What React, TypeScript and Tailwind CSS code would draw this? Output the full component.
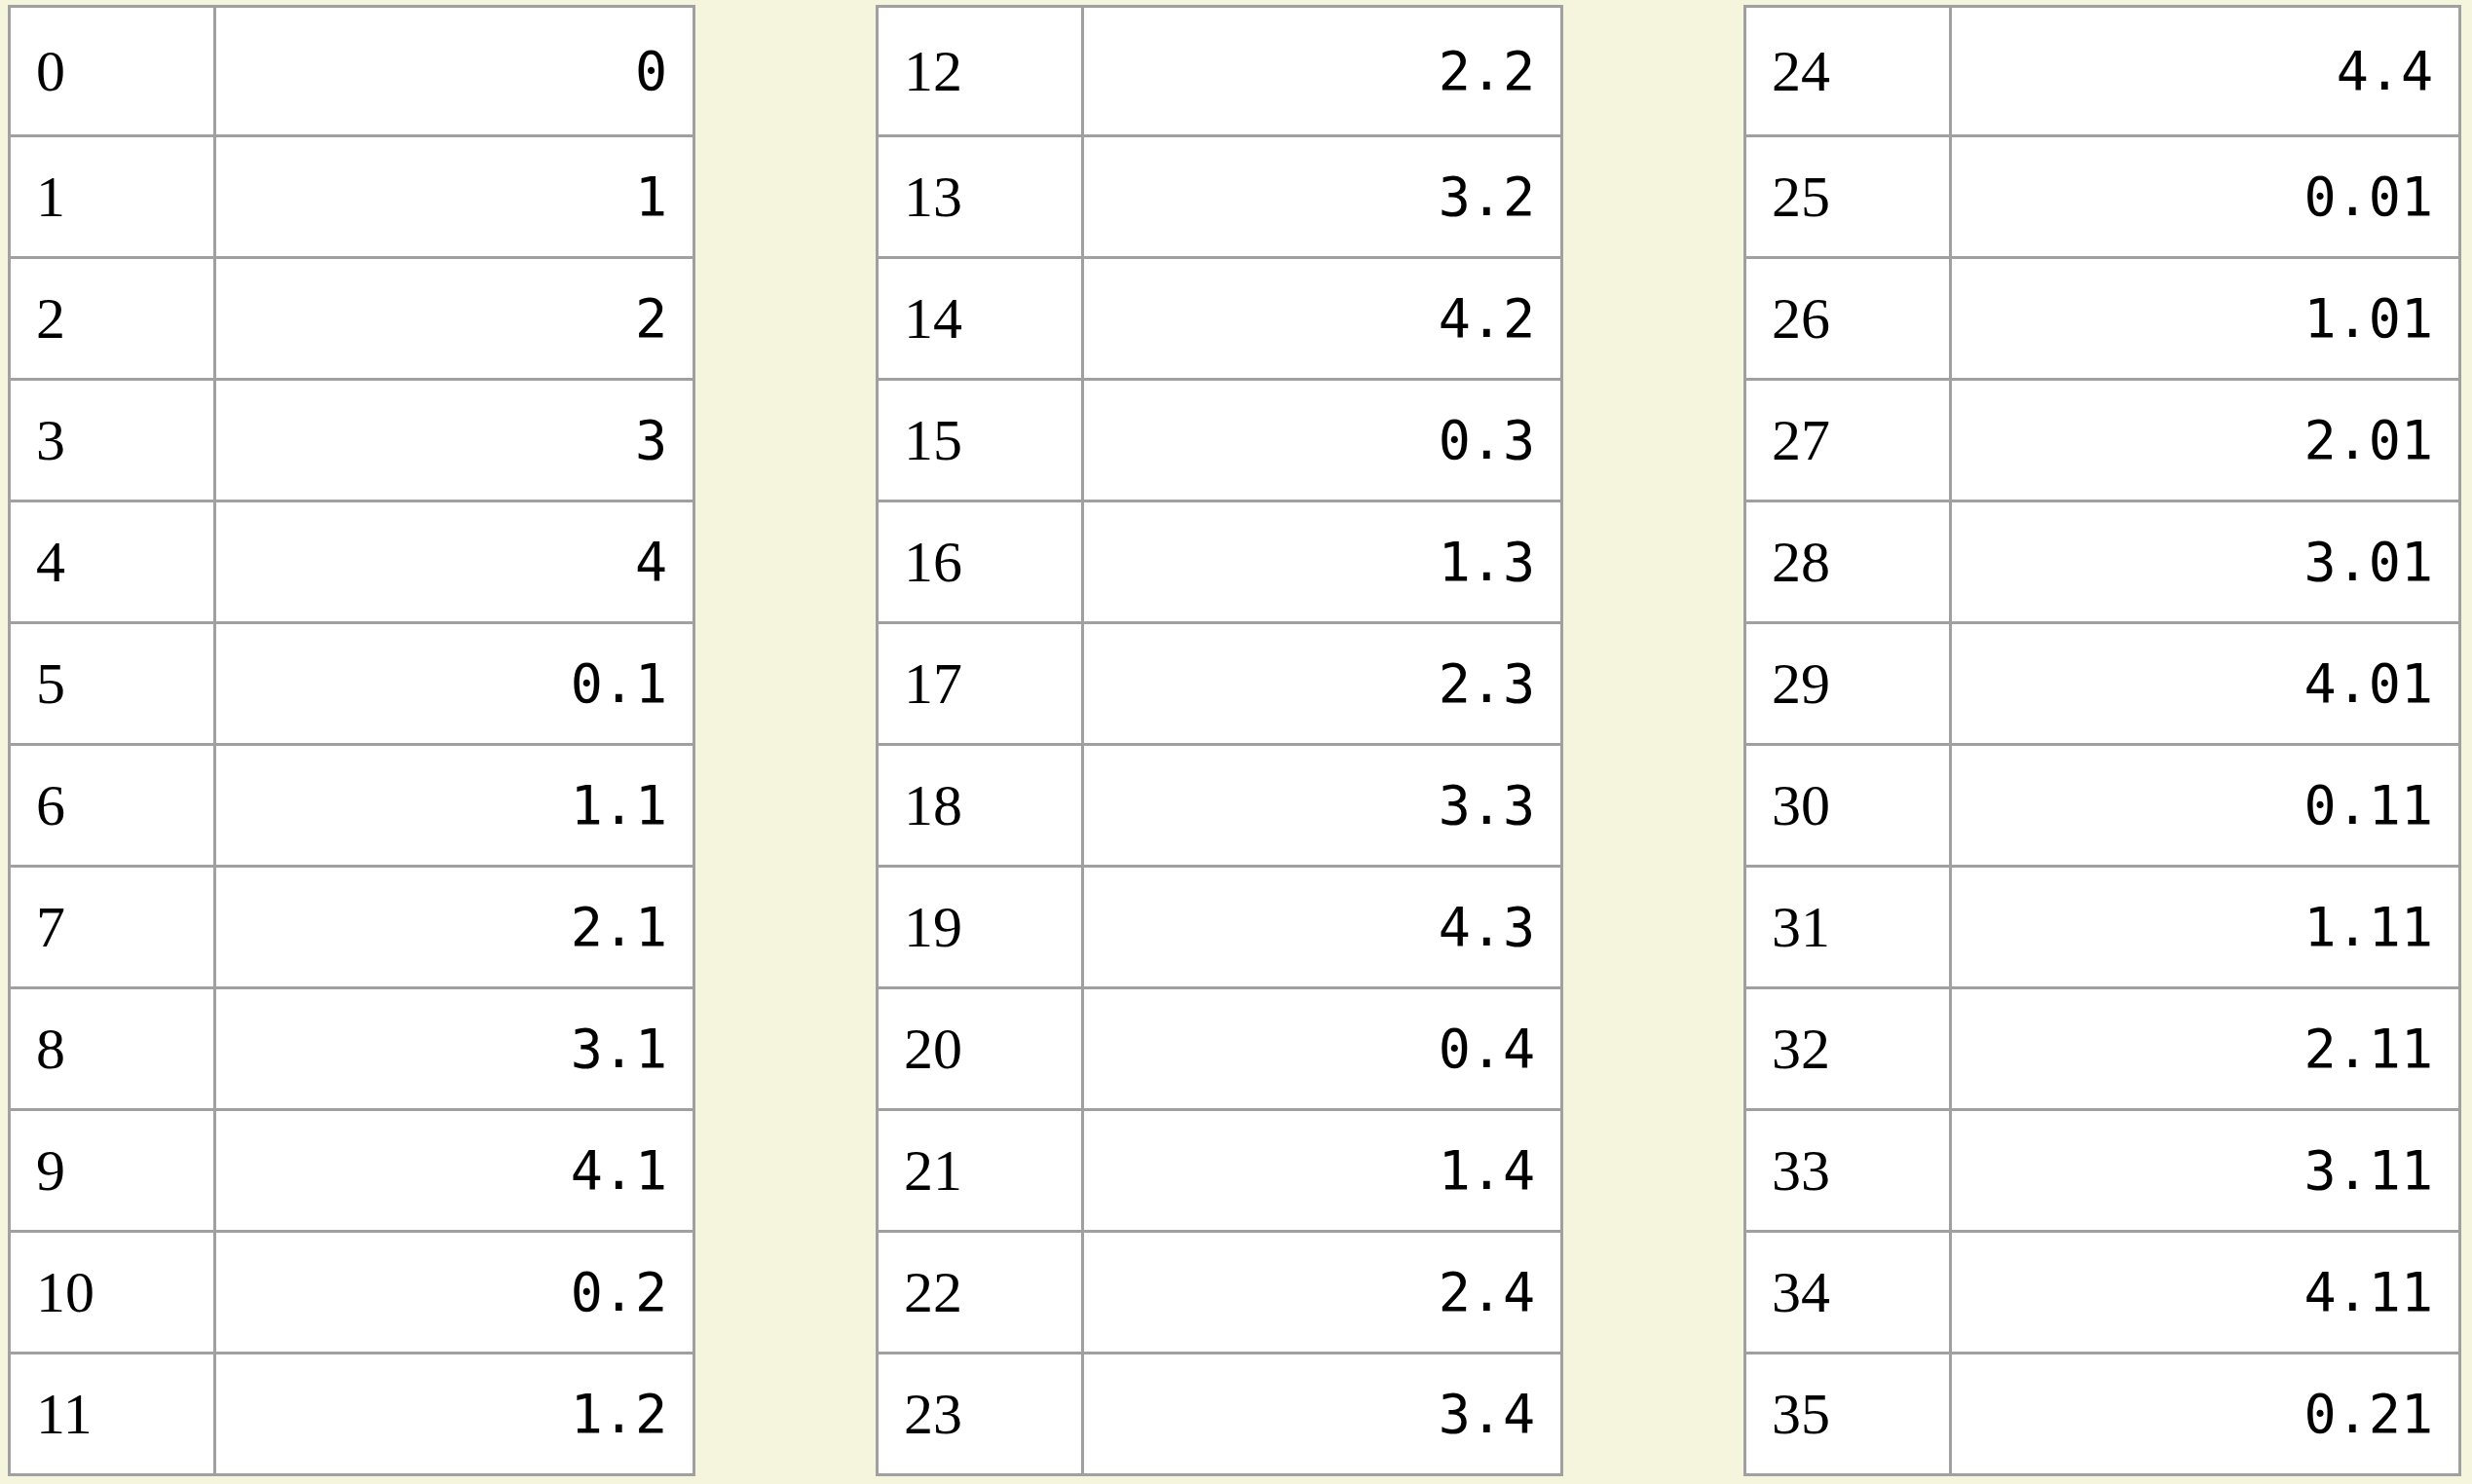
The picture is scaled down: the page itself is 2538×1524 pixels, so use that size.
const values = [
  "0", "1", "2", "3", "4", "0.1", "1.1", "2.1", "3.1", "4.1", "0.2", "1.2",
  "2.2", "3.2", "4.2", "0.3", "1.3", "2.3", "3.3", "4.3", "0.4", "1.4", "2.4", "3.4",
  "4.4", "0.01", "1.01", "2.01", "3.01", "4.01", "0.11", "1.11", "2.11", "3.11", "4.11", "0.21",
];

function NumberTable({ start, wide }: { start: number; wide?: boolean }) {
  const rows = values.slice(start, start + 12);
  return (
    <div className="border-l-[3px] border-t-[3px] border-[#a0a0a0] bg-white">
      {rows.map((v, i) => (
        <div key={start + i} className={`flex ${i === 0 ? "h-[133px]" : "h-[125px]"}`}>
          <div className="flex w-[211px] items-center border-b-[3px] border-r-[3px] border-[#a0a0a0] pl-[26px] font-['Liberation_Serif',serif] text-[60px] text-black">
            {start + i}
          </div>
          <div
            className={`flex ${wide ? "w-[523px]" : "w-[492px]"} items-center justify-end border-b-[3px] border-r-[3px] border-[#a0a0a0] pr-[26px] font-['DejaVu_Sans_Mono',monospace] text-[55px] text-black`}
          >
            {v}
          </div>
        </div>
      ))}
    </div>
  );
}

export default function App() {
  return (
    <div className="min-h-screen bg-[#f5f4dd]">
      <div className="flex items-start gap-[185px] pl-[8px] pt-[5px]">
        <NumberTable start={0} />
        <NumberTable start={12} />
        <NumberTable start={24} wide />
      </div>
    </div>
  );
}
